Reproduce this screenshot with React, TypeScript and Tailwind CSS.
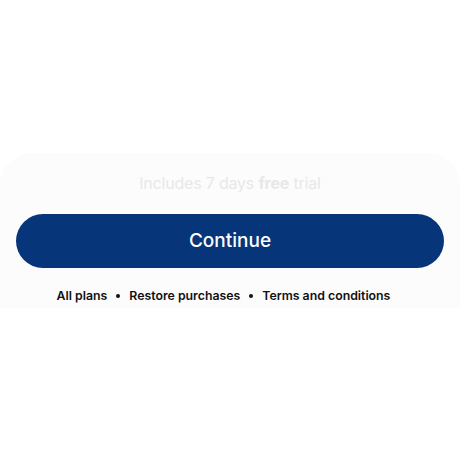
export default function App() {
  return (
    <div className="w-[460px] h-[460px] bg-white flex flex-col font-['Inter',sans-serif]">
      <div className="mt-[153px] h-[155px] bg-[#fcfcfc] rounded-t-[32px] flex flex-col items-center">
        <p className="mt-[20px] text-[16px] leading-[20px] text-[#e8e8e8] tracking-[-0.2px]">
          Includes 7 days <span className="font-bold">free</span> trial
        </p>
        <button className="mt-[21px] w-[428px] h-[54px] rounded-full bg-[#06357a] text-white text-[19px] font-medium">
          Continue
        </button>
        <div className="mt-[19px] mr-[13px] flex items-center gap-[9px] text-[12.3px] font-semibold text-[#111]">
          <span>All plans</span>
          <span className="w-[4px] h-[4px] rounded-full bg-[#111]" />
          <span>Restore purchases</span>
          <span className="w-[4px] h-[4px] rounded-full bg-[#111]" />
          <span>Terms and conditions</span>
        </div>
      </div>
    </div>
  );
}
